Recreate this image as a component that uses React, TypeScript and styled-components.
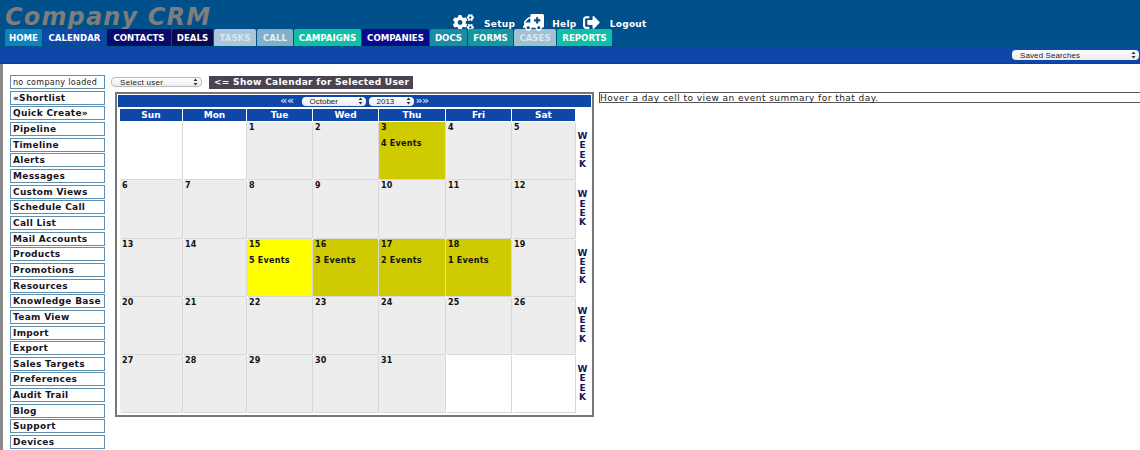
import React from "react";
import styled, { createGlobalStyle } from "styled-components";
import { FaCogs, FaAmbulance, FaSignOutAlt } from "react-icons/fa";

const TABS: { label: string; width: number; bg: string; color?: string }[] = [
  { label: "HOME", width: 37, bg: "#0f81c0" },
  { label: "CALENDAR", width: 63, bg: "#0e47a8" },
  { label: "CONTACTS", width: 64, bg: "#0a0a6e" },
  { label: "DEALS", width: 41, bg: "#0a0a50" },
  { label: "TASKS", width: 42, bg: "#aac6da", color: "#d8e6ee" },
  { label: "CALL", width: 36, bg: "#83aec8", color: "#e8f0f4" },
  { label: "CAMPAIGNS", width: 67, bg: "#0fc0a5" },
  { label: "COMPANIES", width: 67, bg: "#0a0a8c" },
  { label: "DOCS", width: 37, bg: "#1a8da5" },
  { label: "FORMS", width: 45, bg: "#14979f" },
  { label: "CASES", width: 42, bg: "#a2bfd4", color: "#d8e6ee" },
  { label: "REPORTS", width: 55, bg: "#0fc0a5" },
];

const SIDE_LINKS = [
  "«Shortlist",
  "Quick Create»",
  "Pipeline",
  "Timeline",
  "Alerts",
  "Messages",
  "Custom Views",
  "Schedule Call",
  "Call List",
  "Mail Accounts",
  "Products",
  "Promotions",
  "Resources",
  "Knowledge Base",
  "Team View",
  "Import",
  "Export",
  "Sales Targets",
  "Preferences",
  "Audit Trail",
  "Blog",
  "Support",
  "Devices",
];

const DAY_NAMES = ["Sun", "Mon", "Tue", "Wed", "Thu", "Fri", "Sat"];

// events per day of month: count and cell colour
const EVENTS: Record<number, { count: number; tone: "olive" | "yellow" }> = {
  3: { count: 4, tone: "olive" },
  15: { count: 5, tone: "yellow" },
  16: { count: 3, tone: "olive" },
  17: { count: 2, tone: "olive" },
  18: { count: 1, tone: "olive" },
};

const FIRST_OFFSET = 2;
const MONTH_DAYS = 31;

const buildWeeks = (): (number | null)[][] => {
  const cells: (number | null)[] = [];
  for (let i = 0; i < FIRST_OFFSET; i++) cells.push(null);
  for (let d = 1; d <= MONTH_DAYS; d++) cells.push(d);
  while (cells.length % 7 !== 0) cells.push(null);
  const weeks: (number | null)[][] = [];
  for (let i = 0; i < cells.length; i += 7) weeks.push(cells.slice(i, i + 7));
  return weeks;
};

const SelectArrows = () => (
  <svg width="5" height="8" viewBox="0 0 5 8">
    <path d="M2.5 0.5 L4.5 3 H0.5 Z M2.5 7.5 L4.5 5 H0.5 Z" fill="#333" />
  </svg>
);

const App: React.FC = () => {
  const weeks = buildWeeks();
  return (
    <Page>
      <GlobalStyle />
      <Header>
        <TopRow>
          <Logo>Company CRM</Logo>
          <Actions>
            <FaCogs size={21} />
            <ActionLabel $left={10}>Setup</ActionLabel>
            <AmbulanceIcon size={21} />
            <ActionLabel $left={8}>Help</ActionLabel>
            <LogoutIcon size={17} />
            <ActionLabel $left={10}>Logout</ActionLabel>
          </Actions>
        </TopRow>
        <Tabs>
          {TABS.map((t) => (
            <Tab key={t.label} $width={t.width} $bg={t.bg} $color={t.color}>
              {t.label}
            </Tab>
          ))}
        </Tabs>
      </Header>
      <SubBar>
        <SavedSearches>
          Saved Searches
          <SelectArrows />
        </SavedSearches>
      </SubBar>
      <Body>
        <Sidebar>
          <CompanyBox>no company loaded</CompanyBox>
          {SIDE_LINKS.map((l) => (
            <SideLink key={l}>{l}</SideLink>
          ))}
        </Sidebar>
        <Main>
          <UserRow>
            <UserSelect>
              Select user
              <SelectArrows />
            </UserSelect>
            <ShowButton>{"<= Show Calendar for Selected User"}</ShowButton>
          </UserRow>
          <CalendarBox>
            <MonthBar>
              <NavArrows>««</NavArrows>
              <MonthSelect $width={64} $left={8}>
                October
                <SelectArrows />
              </MonthSelect>
              <MonthSelect $width={45} $left={3}>
                2013
                <SelectArrows />
              </MonthSelect>
              <NavArrows $left={2}>»»</NavArrows>
            </MonthBar>
            <Grid>
              {DAY_NAMES.map((d) => (
                <DayHead key={d}>{d}</DayHead>
              ))}
              <span />
              {weeks.map((week, i) => (
                <React.Fragment key={i}>
                  {week.map((day, j) => {
                    const ev = day ? EVENTS[day] : undefined;
                    return (
                      <DayCell key={j} $tone={!day ? "empty" : ev ? ev.tone : "plain"}>
                        {day}
                        {ev && <EventCount>{ev.count} Events</EventCount>}
                      </DayCell>
                    );
                  })}
                  <WeekLink>
                    {"WEEK".split("").map((c, k) => (
                      <span key={k}>{c}</span>
                    ))}
                  </WeekLink>
                </React.Fragment>
              ))}
            </Grid>
          </CalendarBox>
        </Main>
        <Summary>Hover a day cell to view an event summary for that day.</Summary>
      </Body>
    </Page>
  );
};

export default App;

const GlobalStyle = createGlobalStyle`
  html, body {
    margin: 0;
    padding: 0;
    background: #fff;
    overflow: hidden;
  }
  * {
    box-sizing: border-box;
  }
`;

const Page = styled.div`
  width: 1140px;
  height: 450px;
  overflow: hidden;
  font-family: "DejaVu Sans", Verdana, sans-serif;
  color: #111;
`;

const Header = styled.div`
  height: 47px;
  background: #00508c;
  padding: 0 0 0 5px;
`;

const TopRow = styled.div`
  height: 29px;
  display: flex;
  align-items: flex-start;
`;

const Logo = styled.div`
  width: 448px;
  padding-top: 4px;
  font-size: 24px;
  letter-spacing: 1.15px;
  line-height: 26px;
  font-weight: bold;
  font-style: italic;
  color: #7d7d7d;
  white-space: nowrap;
`;

const Actions = styled.div`
  display: flex;
  align-items: center;
  height: 20px;
  margin-top: 12px;
  color: #fff;
`;

const AmbulanceIcon = styled(FaAmbulance)`
  margin-left: 8px;
  transform: scaleX(-1);
`;

const LogoutIcon = styled(FaSignOutAlt)`
  margin-left: 6px;
`;

const ActionLabel = styled.span<{ $left: number }>`
  margin-left: ${(p) => p.$left}px;
  margin-top: 4px;
  font-size: 9px;
  letter-spacing: 0.3px;
  font-weight: bold;
  color: #fff;
`;

const Tabs = styled.div`
  display: flex;
  gap: 1px;
`;

const Tab = styled.div<{ $width: number; $bg: string; $color?: string }>`
  width: ${(p) => p.$width}px;
  height: 17px;
  display: flex;
  align-items: center;
  justify-content: center;
  border-radius: 2px 2px 0 0;
  background: ${(p) => p.$bg};
  color: ${(p) => p.$color ?? "#fff"};
  font-size: 8.6px;
  font-weight: bold;
  white-space: nowrap;
`;

const SubBar = styled.div`
  height: 17px;
  background: #0e47a8;
  display: flex;
  align-items: center;
  justify-content: flex-end;
  padding: 0 1px 0 0;
  border-bottom: 1px solid #0c3f96;
`;

const SelectBase = styled.div`
  display: flex;
  align-items: center;
  justify-content: space-between;
  background: linear-gradient(#fff, #ececec);
  border-radius: 4px;
  font-family: "Liberation Sans", Arial, sans-serif;
  color: #222;
  white-space: nowrap;
`;

const SavedSearches = styled(SelectBase)`
  width: 127px;
  height: 10px;
  padding: 0 3px 0 8px;
  font-size: 8px;
  letter-spacing: 0.1px;
`;

const Body = styled.div`
  height: 386px;
  display: flex;
  align-items: flex-start;
  border-left: 3px solid #8a8a8a;
  padding: 11px 0 0 7px;
`;

const Sidebar = styled.div`
  width: 95px;
  display: flex;
  flex-direction: column;
  gap: 1.67px;
  flex-shrink: 0;
`;

const SideLink = styled.div`
  height: 14px;
  display: flex;
  align-items: center;
  padding-left: 2px;
  border: 1px solid #5f8fae;
  border-bottom-width: 1.5px;
  font-size: 9px;
  letter-spacing: 0.3px;
  font-weight: bold;
  color: #14141e;
  white-space: nowrap;
  background: #fff;
`;

const CompanyBox = styled(SideLink)`
  font-weight: normal;
  font-size: 8px;
  color: #222;
`;

const Main = styled.div`
  width: 479px;
  margin-left: 10px;
  flex-shrink: 0;
`;

const UserRow = styled.div`
  height: 14px;
  display: flex;
  align-items: center;
`;

const UserSelect = styled(SelectBase)`
  width: 91px;
  height: 10px;
  margin-left: -4px;
  padding: 0 3px 0 8px;
  font-size: 8px;
  letter-spacing: 0.3px;
  border: 1px solid #bbb;
`;

const ShowButton = styled.div`
  height: 13px;
  margin-left: 7px;
  padding: 0 4px 0 5px;
  display: flex;
  align-items: center;
  background: #4a4452;
  color: #fff;
  font-size: 9px;
  letter-spacing: 0.3px;
  font-weight: bold;
  white-space: nowrap;
`;

const CalendarBox = styled.div`
  height: 325px;
  margin-top: 3px;
  padding: 1px 1px 0 1px;
  border: 2px solid #777;
  background: #fff;
`;

const MonthBar = styled.div`
  height: 12px;
  display: flex;
  align-items: center;
  justify-content: center;
  background: #0e47a8;
`;

const NavArrows = styled.span<{ $left?: number }>`
  margin-left: ${(p) => p.$left ?? 0}px;
  font-size: 11px;
  font-weight: bold;
  color: #c8d8f0;
  line-height: 10px;
  letter-spacing: -0.5px;
`;

const MonthSelect = styled(SelectBase)<{ $width: number; $left: number }>`
  width: ${(p) => p.$width}px;
  height: 9px;
  margin-left: ${(p) => p.$left}px;
  padding: 0 3px 0 8px;
  font-size: 8px;
`;

const Grid = styled.div`
  display: grid;
  grid-template-columns: 62px 63px 65px 65px 66px 65px 63px 1fr;
  grid-template-rows: 12px repeat(5, 57.25px);
  column-gap: 1px;
  row-gap: 1px;
  margin: 2px 0 0 2px;
`;

const DayHead = styled.div`
  display: flex;
  align-items: center;
  justify-content: center;
  background: #0e47a8;
  color: #fff;
  font-size: 9px;
  font-weight: bold;
`;

const TONES = {
  empty: "#fff",
  plain: "#ededed",
  olive: "#cfcb00",
  yellow: "#ffff00",
};

const DayCell = styled.div<{ $tone: keyof typeof TONES }>`
  padding: 1px 2px;
  background: ${(p) => TONES[p.$tone]};
  box-shadow: 1px 1px 0 #d8d8d8;
  font-size: 8px;
  letter-spacing: 0.25px;
  line-height: 10px;
  font-weight: bold;
  color: #111;
`;

const EventCount = styled.div`
  margin-top: 6px;
  white-space: nowrap;
`;

const WeekLink = styled.div`
  align-self: center;
  display: flex;
  flex-direction: column;
  align-items: center;
  width: 13px;
  font-size: 9px;
  line-height: 9.3px;
  font-weight: bold;
  color: #14145a;
`;

const Summary = styled.div`
  flex: 1;
  height: 11px;
  margin: 17px -2px 0 5px;
  padding-left: 0;
  display: flex;
  align-items: center;
  border: 1px solid #555;
  font-size: 9px;
  letter-spacing: 0.45px;
  color: #222;
  white-space: nowrap;
`;
